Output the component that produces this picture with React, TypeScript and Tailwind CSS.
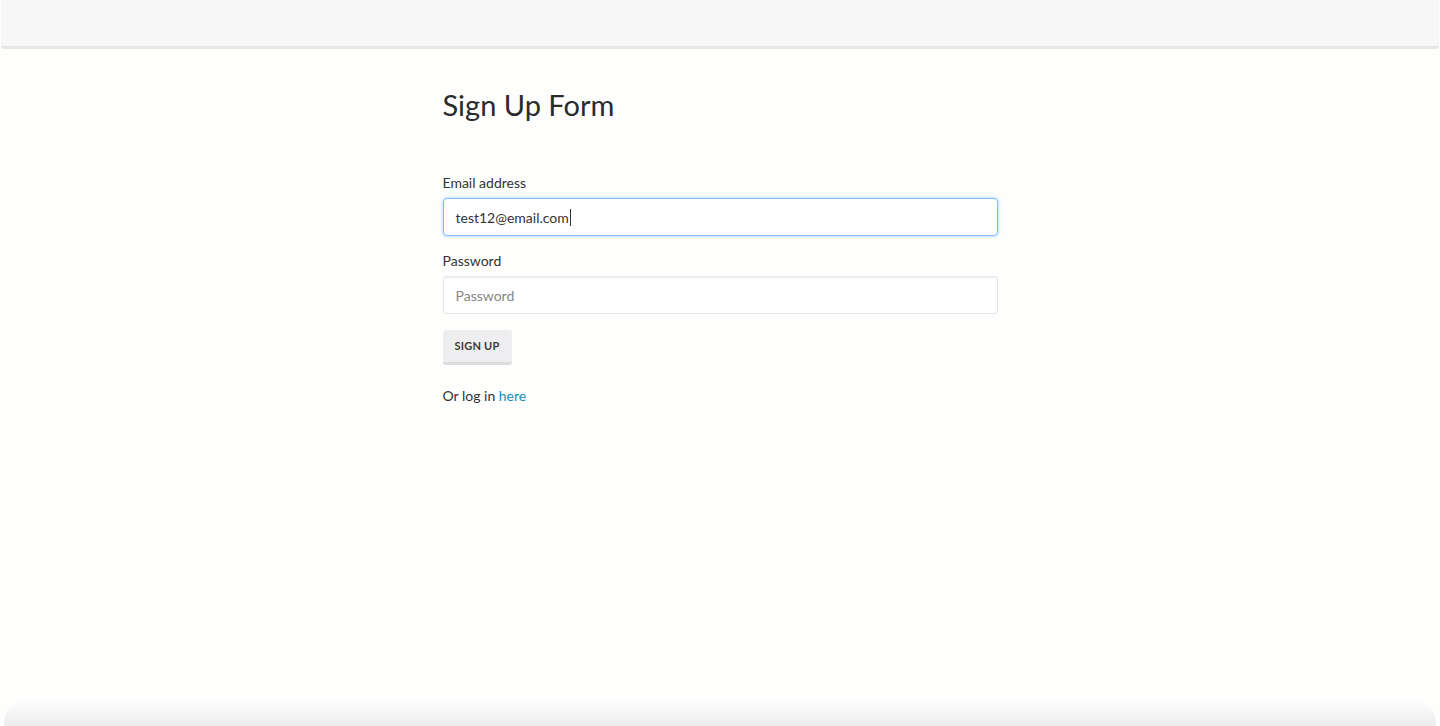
import React from "react";

export default function App() {
  return (
    <div
      className="h-[726px] flex flex-col bg-[#fefefd] text-[#333] overflow-hidden"
      style={{ fontFamily: "Lato, 'Open Sans', sans-serif" }}
    >
      <div className="mx-px h-[49px] shrink-0 bg-[#f7f7f7] border-b-[3px] border-[#e6e6e6] rounded-b-[3px]" />
      <div className="flex-1 flex justify-center">
        <div className="w-[555px] pt-[38px]">
          <h1 className="text-[29px] leading-[36px] text-[#2b2b2b] font-normal">Sign Up Form</h1>
          <form className="mt-[50px]">
            <label className="block text-[14px] leading-[20px] text-[#333] mb-[5px]">Email address</label>
            <div className="h-[38px] rounded-[4px] border border-[#80bdff] shadow-[0_0_3px_1px_rgba(128,189,255,0.45)] flex items-center px-[12px] text-[14px] text-[#333] bg-white">
              test12@email.com<span className="inline-block w-px h-[17px] bg-[#333] ml-px" />
            </div>
            <label className="block text-[14px] leading-[20px] text-[#333] mt-[15px] mb-[5px]">Password</label>
            <div className="h-[38px] rounded-[4px] border border-[#e3e3e3] border-t-2 border-t-[#ebebeb] flex items-center px-[12px] text-[14px] text-[#888] bg-white">
              Password
            </div>
            <button
              type="button"
              className="mt-[16px] w-[69px] h-[35px] rounded-[3px] bg-[#eeeef0] border-b-[3px] border-[#dcdcdc] text-[11px] font-bold text-[#3a3a3a] tracking-[0.2px]"
            >
              SIGN UP
            </button>
            <p className="mt-[20px] text-[14px] text-[#333]">
              Or log in <a className="text-[#1b8bb4]">here</a>
            </p>
          </form>
        </div>
      </div>
      <div className="h-[26px] mx-[4px] bg-gradient-to-b from-[#fefefe] to-[#ececec] rounded-t-[24px]" />
    </div>
  );
}
